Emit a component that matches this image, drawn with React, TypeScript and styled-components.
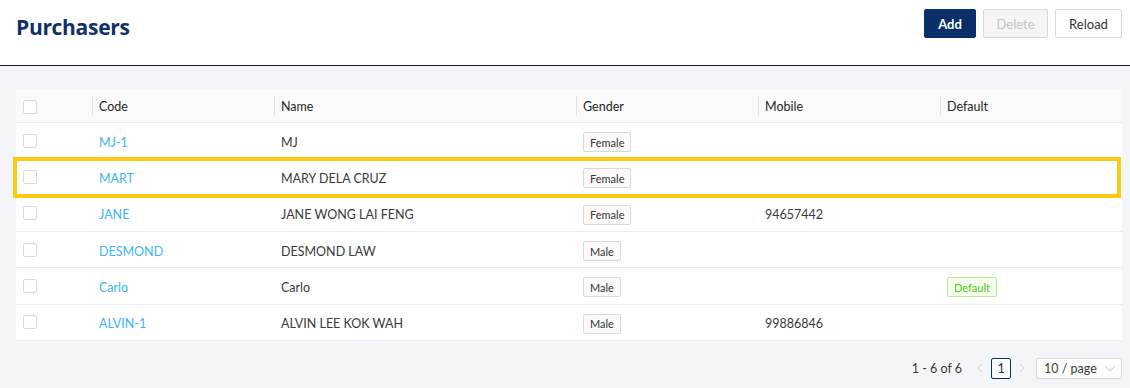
import React from "react";
import styled, { createGlobalStyle } from "styled-components";

const Global = createGlobalStyle`
  html, body { margin: 0; padding: 0; }
  body {
    background: #f4f5f9;
    font-family: "Lato", "Open Sans", "Liberation Sans", sans-serif;
    color: #333;
  }
  * { box-sizing: border-box; }
`;

const Page = styled.div`
  width: 1130px;
  min-height: 388px;
  background: #f4f5f9;
`;

const Header = styled.header`
  height: 66px;
  background: #fff;
  border-bottom: 1px solid #101a2a;
  display: flex;
  justify-content: space-between;
  align-items: flex-start;
  padding: 0 8px 0 16px;
`;

const Title = styled.h1`
  margin: 13px 0 0;
  font-family: "Open Sans", "Lato", sans-serif;
  font-size: 21px;
  font-weight: 700;
  color: #0f3169;
  letter-spacing: -0.3px;
`;

const Toolbar = styled.div`
  display: flex;
  gap: 7px;
  margin-top: 9px;
`;

const Button = styled.button<{ $variant?: "primary" | "disabled" | "default"; $w: number }>`
  width: ${(p) => p.$w}px;
  height: 29px;
  padding: 0;
  font-family: inherit;
  font-size: 13px;
  border-radius: 2px;
  border: 1px solid
    ${(p) => (p.$variant === "primary" ? "#0a2f6b" : "#d9d9d9")};
  background: ${(p) =>
    p.$variant === "primary" ? "#0a2f6b" : p.$variant === "disabled" ? "#f5f5f5" : "#fff"};
  color: ${(p) =>
    p.$variant === "primary" ? "#fff" : p.$variant === "disabled" ? "#c4c4c4" : "#333"};
  font-weight: ${(p) => (p.$variant === "primary" ? 700 : 400)};
  cursor: ${(p) => (p.$variant === "disabled" ? "not-allowed" : "pointer")};
`;

const Content = styled.main`
  padding: 23px 8px 0 16px;
`;

const TableWrap = styled.div`
  position: relative;
  width: 1106px;
  background: #fff;
`;

const cols = "76px 182px 302px 182px 182px 182px";

const HeadRow = styled.div`
  display: grid;
  grid-template-columns: ${cols};
  height: 34px;
  background: #fafafa;
  border-bottom: 1px solid #ececec;
`;

const HeadCell = styled.div<{ $sep?: boolean }>`
  position: relative;
  display: flex;
  align-items: center;
  padding: 2px 0 0 7px;
  font-size: 12.5px;
  color: #262626;
  &::before {
    content: "";
    display: ${(p) => (p.$sep ? "block" : "none")};
    position: absolute;
    left: 0;
    top: 7px;
    height: 20px;
    width: 1px;
    background: #e3e3e3;
  }
`;

const Row = styled.div`
  display: grid;
  grid-template-columns: ${cols};
  height: 36.33px;
  border-bottom: 1px solid #ececec;
`;

const Cell = styled.div<{ $link?: boolean }>`
  display: flex;
  align-items: center;
  padding: 3px 0 0 7px;
  font-size: 12.5px;
  color: ${(p) => (p.$link ? "#3db4f6" : "#3a3a3a")};
`;

const CheckCell = styled(Cell)`
  padding-top: 0;
`;

const Check = styled.span`
  width: 14px;
  height: 14px;
  border: 1px solid #d9d9d9;
  border-radius: 2px;
  background: #fff;
  display: inline-block;
`;

const Tag = styled.span<{ $green?: boolean }>`
  display: inline-flex;
  align-items: center;
  height: 20px;
  padding: 0 6px;
  font-size: 11px;
  border-radius: 2px;
  border: 1px solid ${(p) => (p.$green ? "#b7eb8f" : "#d9d9d9")};
  background: ${(p) => (p.$green ? "#f6ffed" : "#fafafa")};
  color: ${(p) => (p.$green ? "#52c41a" : "#333")};
`;

const Highlight = styled.div`
  position: absolute;
  left: -3px;
  top: 68px;
  width: 1108px;
  height: 41px;
  border: 4px solid #fdc913;
  pointer-events: none;
`;

const Pager = styled.div`
  width: 1106px;
  display: flex;
  justify-content: flex-end;
  align-items: center;
  margin-top: 17px;
  height: 21px;
  font-size: 12.5px;
  color: #3a3a3a;
`;

const Total = styled.span`
  margin-right: 8px;
`;

const Arrow = styled.span`
  width: 20px;
  display: inline-flex;
  justify-content: center;
`;

const PageBox = styled.span`
  width: 20px;
  height: 21px;
  margin: 0 1px;
  display: inline-flex;
  align-items: center;
  justify-content: center;
  border: 1px solid #0a2f6b;
  border-radius: 2px;
  background: #fff;
  color: #0a2f6b;
`;

const Select = styled.span`
  margin-left: 4px;
  width: 86px;
  height: 21px;
  display: inline-flex;
  align-items: center;
  justify-content: space-between;
  padding: 0 5px 0 7px;
  border: 1px solid #d9d9d9;
  border-radius: 2px;
  background: #fff;
  color: #3a3a3a;
`;

const Chevron = ({ dir }: { dir: "left" | "right" | "down" }) => {
  const d =
    dir === "left" ? "M6 1 L2 5 L6 9" : dir === "right" ? "M2 1 L6 5 L2 9" : "M1 3 L6 8 L11 3";
  const w = dir === "down" ? 12 : 8;
  return (
    <svg width={w} height={10} viewBox={`0 0 ${w} 10`} fill="none">
      <path d={d} stroke={dir === "down" ? "#c4c4c4" : "#cfcfcf"} strokeWidth="1" />
    </svg>
  );
};

type P = { code: string; name: string; gender: string; mobile?: string; isDefault?: boolean };

const data: P[] = [
  { code: "MJ-1", name: "MJ", gender: "Female" },
  { code: "MART", name: "MARY DELA CRUZ", gender: "Female" },
  { code: "JANE", name: "JANE WONG LAI FENG", gender: "Female", mobile: "94657442" },
  { code: "DESMOND", name: "DESMOND LAW", gender: "Male" },
  { code: "Carlo", name: "Carlo", gender: "Male", isDefault: true },
  { code: "ALVIN-1", name: "ALVIN LEE KOK WAH", gender: "Male", mobile: "99886846" },
];

export default function App() {
  return (
    <Page>
      <Global />
      <Header>
        <Title>Purchasers</Title>
        <Toolbar>
          <Button $variant="primary" $w={52}>Add</Button>
          <Button $variant="disabled" $w={65}>Delete</Button>
          <Button $w={67}>Reload</Button>
        </Toolbar>
      </Header>
      <Content>
        <TableWrap>
          <HeadRow>
            <HeadCell>
              <Check />
            </HeadCell>
            <HeadCell $sep>Code</HeadCell>
            <HeadCell $sep>Name</HeadCell>
            <HeadCell $sep>Gender</HeadCell>
            <HeadCell $sep>Mobile</HeadCell>
            <HeadCell $sep>Default</HeadCell>
          </HeadRow>
          {data.map((r) => (
            <Row key={r.code}>
              <CheckCell>
                <Check />
              </CheckCell>
              <Cell $link>{r.code}</Cell>
              <Cell>{r.name}</Cell>
              <Cell>
                <Tag>{r.gender}</Tag>
              </Cell>
              <Cell>{r.mobile ?? ""}</Cell>
              <Cell>{r.isDefault ? <Tag $green>Default</Tag> : null}</Cell>
            </Row>
          ))}
          <Highlight />
        </TableWrap>
        <Pager>
          <Total>1 - 6 of 6</Total>
          <Arrow>
            <Chevron dir="left" />
          </Arrow>
          <PageBox>1</PageBox>
          <Arrow>
            <Chevron dir="right" />
          </Arrow>
          <Select>
            10 / page
            <Chevron dir="down" />
          </Select>
        </Pager>
      </Content>
    </Page>
  );
}
